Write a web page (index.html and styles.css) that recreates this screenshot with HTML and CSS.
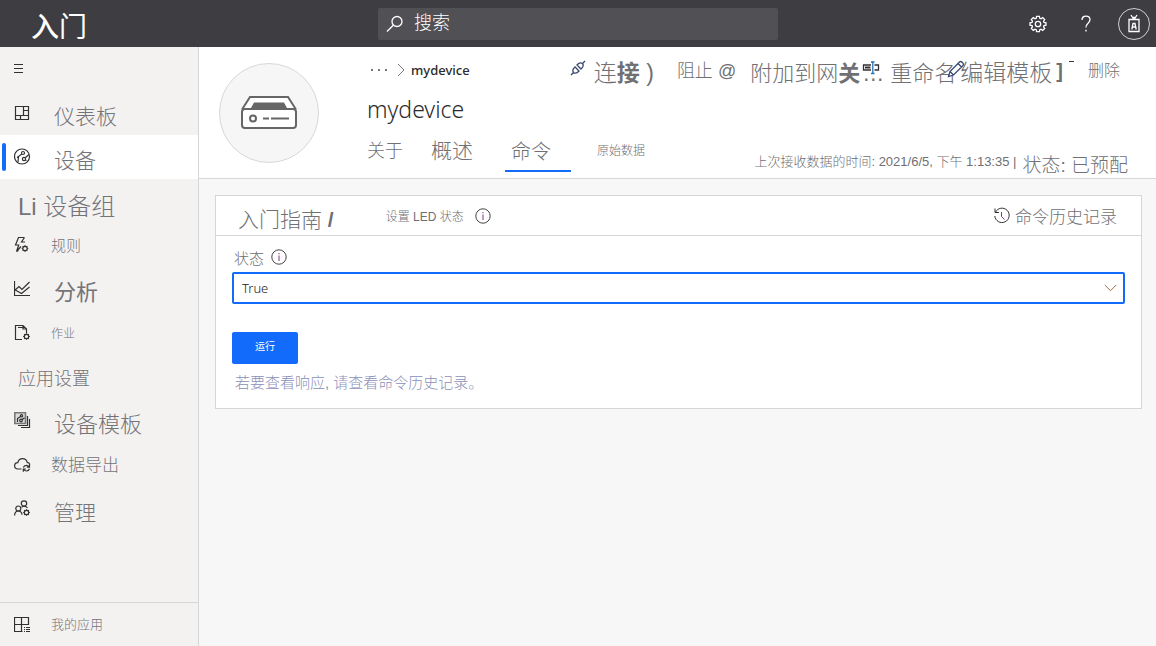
FILE: index.html
```html
<!DOCTYPE html>
<html lang="zh-CN">
<head>
<meta charset="utf-8">
<title>mydevice</title>
<link rel="stylesheet" href="styles.css">
</head>
<body>
<header class="topbar">
  <div class="brand"><b>入</b>门</div>
  <label class="search">
    <svg width="18" height="18" viewBox="0 0 18 18"><circle cx="11" cy="6.5" r="5"/><path d="M7.3 10.2 1 16.5"/></svg>
    <input type="search" placeholder="搜索" aria-label="搜索">
  </label>
  <div class="topbar-actions">
    <button class="icon-btn" aria-label="设置"><svg width="18" height="18" viewBox="0 0 18 18"><path d="M7.6 1.3h2.8l.4 2 1.2.5 1.7-1.2 2 2-1.2 1.7.5 1.2 2 .4v2.2l-2 .4-.5 1.2 1.2 1.7-2 2-1.7-1.2-1.2.5-.4 2H7.6l-.4-2-1.2-.5-1.7 1.2-2-2 1.2-1.7-.5-1.2-2-.4V7.9l2-.4.5-1.2-1.2-1.7 2-2L6 3.8l1.2-.5z"/><circle cx="9" cy="9" r="2.7"/></svg></button>
    <button class="icon-btn" aria-label="帮助"><svg width="12" height="18" viewBox="0 0 12 18"><path d="M2 5c0-2.500 1.700-3.800 4-3.800S10 2.600 10 4.800C10 8 6 8 6 12.500"/><path d="M6 14.800v1.700"/></svg></button>
    <button class="avatar" aria-label="帐户"><svg width="14" height="20" viewBox="0 0 14 20"><path d="M2 5.500h10v12H2zM4 1l2.500 4M10 1 7.500 5M5.500 3.500h3M4.800 15.500 6 9.500h2l1.200 6M5.200 13h3.600"/></svg></button>
  </div>
</header>
<div class="shell">
  <nav class="sidebar" aria-label="导航">
    <button class="nav-item menu" aria-label="菜单"><svg width="18" height="18" viewBox="0 0 18 18"><path d="M0 4.500h9M0 8.500h9M0 12.500h9"/></svg></button>
    <a class="nav-item big" href="#"><svg width="18" height="18" viewBox="0 0 18 18"><path d="M1.500 2.500h13v13h-13zM1.500 11.500h13M9.500 2.500v9M9.500 6.500h5M6.500 11.500v4"/></svg><span class="t21">仪表板</span></a>
    <a class="nav-item big active" href="#" aria-current="page"><svg width="18" height="18" viewBox="0 0 18 18"><circle cx="8" cy="8.500" r="7.500"/><circle cx="9" cy="5" r="1.500"/><circle cx="10" cy="11" r="1.600"/><path d="M7.800 6 4.500 8.500 4 14M11.200 9.800l3.800-3.300M3 9.500l1.500-1M11 12l1.500.5"/></svg><span class="t21">设备</span></a>
    <a class="nav-item big plain" href="#"><span class="t24">Li 设备组</span></a>
    <a class="nav-item" href="#"><svg width="18" height="18" viewBox="0 0 18 18"><path d="M10.500 1.500H4.500L1.500 9h3.200L2.500 15.500 7 10.500M10.500 1.500 7.500 6H11M2.500 15.500l2-1"/><circle cx="11" cy="12.500" r="2.200"/><path d="M11 9.200v1M11 14.800v1M7.700 12.500h1M13.300 12.500h1M8.700 10.200l.7.7M12.600 14.100l.7.700M8.700 14.800l.7-.7M12.600 10.900l.7-.7"/></svg><span class="t15">规则</span></a>
    <a class="nav-item big" href="#"><svg width="18" height="18" viewBox="0 0 18 18"><path d="M.5 1v14.500H16M.5 10.500 5 6.500l3 3L15.500 2M.500 9.500 7.500 13.500 15.500 7"/></svg><span class="t22 medium">分析</span></a>
    <a class="nav-item" href="#"><svg width="18" height="18" viewBox="0 0 18 18"><path d="M8 15.500H1.500v-14H9l3.500 3.500v4M4 3.500h5M9 1.500V5h3.500"/><circle cx="12.500" cy="12.500" r="2.200"/><path d="M12.500 9.200v1M12.500 14.800v1M9.200 12.500h1M14.800 12.500h1M10.200 10.200l.7.7M14.100 14.100l.7.700M10.200 14.800l.7-.7M14.100 10.900l.7-.7"/></svg><span class="t12">作业</span></a>
    <a class="nav-item plain" href="#"><span class="t18">应用设置</span></a>
    <a class="nav-item big" href="#"><svg width="18" height="18" viewBox="0 0 18 18"><path d="M.8.8h10.700v10.700H.8z" fill="#ddd" stroke="#777" stroke-width="1.600"/><circle cx="7.500" cy="3.800" r="1.100"/><circle cx="7" cy="8.500" r="1.300"/><path d="M6.500 4.500 3.500 6.500V10M8 7.700l2.500-2M13.500 4v9.500H4M15.500 7v8.500H7"/></svg><span class="t22">设备模板</span></a>
    <a class="nav-item" href="#"><svg width="18" height="18" viewBox="0 0 18 18"><path d="M7.500 13H4C2 13 .600 11.700.600 9.800S2 6.700 3.800 6.600C4.500 4 6.300 2.700 8.500 2.700c2.300 0 4.100 1.400 4.700 3.600 1.400.2 2.300 1 2.600 2.200M9.300 11.500c.6-1.500 1.700-2.200 3-2.200 1.200 0 2.100.5 2.800 1.500M15.500 8.500v2.700h-2.700M15.500 12.800c-.6 1.500-1.700 2.200-3 2.200-1.200 0-2.100-.5-2.800-1.500M9.300 15.700V13H12"/></svg><span class="t17">数据导出</span></a>
    <a class="nav-item big" href="#"><svg width="18" height="18" viewBox="0 0 18 18"><circle cx="10" cy="3.500" r="2.700"/><circle cx="4.300" cy="8.500" r="2.500"/><path d="M.6 15.500c0-2.700 1.500-4.500 3.700-4.500s3.700 1.800 3.700 3.700M7.500 7.300c1.500-1.500 4.500-1.500 6 .7"/><circle cx="12.500" cy="12.500" r="2.200"/><path d="M12.500 9.200v1M12.500 14.800v1M9.200 12.500h1M14.800 12.500h1M10.200 10.200l.7.7M14.100 14.100l.7.700M10.200 14.800l.7-.7M14.100 10.900l.7-.7"/></svg><span class="t21">管理</span></a>
    <a class="nav-item footer-item" href="#"><svg width="18" height="18" viewBox="0 0 18 18"><path d="M8.500 15.500h-8v-14h14v7.500M.500 8.500h14M7.500 1.500v14M10 11.500h1M12 11.500h4M10 13.500h1M12 13.500h4M10 15.500h1M12 15.500h4"/></svg><span class="t13">我的应用</span></a>
  </nav>
  <main class="main">
    <section class="device">
      <div class="device-pic"><svg width="58" height="36" viewBox="0 0 58 36"><path d="M2 14.500 10 2h38l8 12.500M5 14h48a3 3 0 0 1 3 3v13a3 3 0 0 1-3 3H5a3 3 0 0 1-3-3V17a3 3 0 0 1 3-3z" fill="#fff" stroke="#666" stroke-width="2"/><path d="M10.500 14 14 7.500h30l3.500 6.500z" fill="#666" stroke="none"/><circle cx="13" cy="23.500" r="3" fill="none" stroke="#666" stroke-width="2"/><path d="M23 23.500h6M31 23.500h18" stroke="#666" stroke-width="2"/></svg></div>
      <div class="device-info">
        <div class="row">
          <div class="crumbs"><span class="dots"><svg width="18" height="4" viewBox="0 0 18 4"><path d="M1 2h2M8 2h2M15 2h2" stroke-width="2"/></svg></span><svg width="8" height="14" viewBox="0 0 8 14"><path d="M1 1l6 6-6 6"/></svg><strong>mydevice</strong></div>
          <div class="commands">
            <button class="cmd connect"><svg width="16" height="16" viewBox="0 0 16 16"><path d="M1 15l2.500-2.500M12.500 3.500 15 1M3.500 12.500c-1.500-2-.8-3.500 1.500-5.500l4 4c-2 2.300-3.500 3-5.500 1.500zM12.500 3.500c-2-1.500-3.500-.8-5.500 1.500l4 4c2.300-2 3-3.500 1.500-5.500z"/></svg><span class="t23">连<b>接</b> )</span></button>
            <button class="cmd block"><span class="t18">阻止 @</span></button>
            <button class="cmd gateway"><span class="t22">附加到网<b>关</b></span></button>
            <button class="cmd rename"><svg width="18" height="14" viewBox="0 0 18 14"><path d="M9 4H1.500v5H9M12.500 4H16.500v5h-4"/><path d="M3 6.500h5.500" stroke-width="2"/><path d="M10.800 1.500v10.500M9 1h3.500M9 12.500h3.500" stroke="#2473b8"/></svg><span class="t22">… 重命名</span></button>
            <button class="cmd edit"><svg width="18" height="18" viewBox="0 0 18 18"><path d="M1.500 16.500 3 11.500 12.500 2c1.500-1.500 5 1.500 3.500 3.500L6.500 15zM11 3.500l3.500 3.500M3 11.500 6.500 15"/></svg><span class="t23">编辑模板</span><b class="bracket">]</b></button>
            <span class="mark" aria-hidden="true"></span>
            <button class="cmd delete"><span class="t16">删除</span></button>
          </div>
        </div>
        <h1>mydevice</h1>
        <div class="row tab-row">
          <div class="tabs">
            <a class="tab t18" href="#">关于</a>
            <a class="tab t21" href="#">概述</a>
            <a class="tab t20 selected" href="#">命令</a>
            <a class="tab t12" href="#">原始数据</a>
          </div>
          <div class="meta"><span class="t13">上次接收数据的时间: 2021/6/5, 下午 1:13:35 |</span><span class="status t19">状态: 已预配</span></div>
        </div>
      </div>
    </section>
    <section class="card">
      <div class="card-head">
        <h2 class="t21">入门指南 <b>/</b></h2>
        <span class="t12">设置 LED 状态</span>
        <svg class="info" width="16" height="16" viewBox="0 0 16 16"><circle cx="8" cy="8" r="7.200"/><path d="M8 6.500V12M8 4v1.300" stroke="#84307f"/></svg>
        <button class="history"><svg width="18" height="18" viewBox="0 0 18 18"><path d="M2.500 5.200A7.200 7.200 0 1 1 1.800 9M2 1.500v4h4"/><path d="M8.500 5v4.500l3 3" stroke="#84307f"/></svg><span class="t17">命令历史记录</span></button>
      </div>
      <form class="card-body">
        <div class="field-label"><label class="t15" for="state">状态</label><svg class="info" width="16" height="16" viewBox="0 0 16 16"><circle cx="8" cy="8" r="7.200"/><path d="M8 6.500V12M8 4v1.300" stroke="#84307f"/></svg></div>
        <div class="select-box">
          <select id="state"><option>True</option><option>False</option></select>
          <svg class="chevron" width="13" height="8" viewBox="0 0 13 8"><path d="M.8 1l5.700 5.700L12.200 1"/></svg>
        </div>
        <button class="run" type="button">运行</button>
        <p class="hint">若要查看响应, 请查看命令历史记录。</p>
      </form>
    </section>
  </main>
</div>
</body>
</html>
```
FILE: styles.css
```css
* { box-sizing: border-box; }
body {
  margin: 0;
  min-height: 100vh;
  display: flex;
  flex-direction: column;
  font-family: "Liberation Sans", "Noto Sans CJK SC", sans-serif;
  font-weight: 300;
  color: #6f6f74;
  background: #f7f7f7;
}
button, input, select { font: inherit; color: inherit; }
button { border: 0; padding: 0; background: none; cursor: pointer; }
a { color: inherit; text-decoration: none; }
svg { flex: none; fill: none; stroke: #323130; stroke-width: 1; }
h1, h2, p { margin: 0; font-weight: 300; }
b { font-weight: 600; }

.t12 { font-size: 12px; }
.t13 { font-size: 13px; }
.t15 { font-size: 15px; }
.t16 { font-size: 16px; }
.t17 { font-size: 17px; }
.t18 { font-size: 18px; }
.t19 { font-size: 19px; }
.t20 { font-size: 20px; }
.t21 { font-size: 21px; }
.t22 { font-size: 22px; }
.t23 { font-size: 23px; }
.t24 { font-size: 24px; }
.medium { font-weight: 400; }

.topbar {
  display: grid;
  grid-template-columns: 1fr 400px 1fr;
  align-items: center;
  height: 47px;
  background: #3e3d42;
  color: #fff;
}
.topbar svg { stroke: #fff; stroke-width: 1.3; }
.brand { padding: 8px 0 0 31px; font-size: 28px; line-height: 36px; font-weight: 400; }
.brand b { font-weight: 500; }
.search {
  display: flex;
  align-items: center;
  gap: 10px;
  height: 32px;
  padding-left: 8px;
  background: #515055;
  border-radius: 2px;
}
.search input { flex: 1; min-width: 0; border: 0; padding: 0; outline: 0; background: none; font-size: 18px; }
.search input::placeholder { color: #fff; opacity: 1; }
.topbar-actions { display: flex; justify-content: flex-end; align-items: center; padding-right: 6px; }
.icon-btn { display: grid; place-items: center; width: 48px; height: 46px; }
.avatar { display: grid; place-items: center; width: 32px; height: 32px; margin-left: 8px; border: 1px solid #d0d0d0; border-radius: 50%; }

.shell { flex: 1; display: flex; }
.sidebar { display: flex; flex-direction: column; flex: none; width: 199px; background: #f3f2f1; border-right: 1px solid #d6d6d6; }
.nav-item { position: relative; display: flex; align-items: center; gap: 19px; height: 44px; padding-left: 14px; line-height: 28px; color: #747478; }
.nav-item svg { stroke-width: 1.2; }
.nav-item span { padding-top: 1px; }
.nav-item.big span { padding-top: 8px; }
.big svg + span { margin-left: 3px; }
.nav-item.plain { padding: 3px 0 0 18px; }
.active { background: #fff; }
.active::before { content: ""; position: absolute; left: 2px; top: 8px; width: 4px; height: 28px; border-radius: 2px; background: #136bfb; }
.footer-item { margin-top: auto; border-top: 1px solid #d6d6d6; }

.main { flex: 1; min-width: 0; }
.device { display: flex; gap: 48px; height: 132px; padding: 0 28px 0 20px; background: #fff; border-bottom: 1px solid #d6d6d6; }
.device-pic { display: grid; place-items: center; flex: none; width: 100px; height: 100px; margin-top: 16px; border: 1px solid #d8d8d8; border-radius: 50%; background: #f6f6f6; }
.device-info { flex: 1; min-width: 0; display: flex; flex-direction: column; }
.row { display: flex; justify-content: space-between; white-space: nowrap; }
.crumbs { display: flex; align-items: center; gap: 6px; height: 46px; font-family: "Noto Sans", sans-serif; font-size: 13px; color: #2b2b2b; }
.crumbs strong { font-weight: 500; }
.crumbs svg { stroke: #777; }
.dots { display: flex; width: 24px; padding-left: 3px; }
.commands { display: flex; align-items: center; height: 46px; padding: 2px 8px 0 0; gap: 14px; }
.cmd { position: relative; display: flex; align-items: center; white-space: nowrap; }
.connect { gap: 8px; margin-right: 9px; }
.connect svg { margin-bottom: 6px; stroke: #38486f; stroke-width: 1.3; }
.block, .delete { padding-bottom: 5px; }
.rename svg { position: absolute; left: 0; top: 6px; stroke-width: 1.3; }
.edit svg { position: absolute; left: -13px; top: 6px; fill: #fff; stroke: #38486f; stroke-width: 1.3; }
.gateway { margin-right: -12px; }
.edit { margin-left: -10px; }
.bracket { margin-left: 4px; font-size: 20px; }
.mark { align-self: flex-start; width: 5px; height: 1px; margin: 12px 0 0 -8px; background: #333; }
h1 { font-family: "Noto Sans", sans-serif; font-size: 23px; line-height: 32px; font-weight: 300; color: #2b2b2b; }
.tab-row { margin-top: auto; height: 54px; }
.tabs { display: flex; }
.tab { display: flex; align-items: center; margin-right: 28px; height: 48px; }
.tab.selected { margin: 0 26px 0 4px; padding: 6px 20px 0 6px; height: 47px; border-bottom: 2px solid #136bfb; }
.meta { display: flex; align-items: center; gap: 6px; padding-top: 18px; }
.status { padding-top: 6px; }

.card { margin: 16px 14px 0 16px; background: #fff; border: 1px solid #d6d6d6; }
.card-head { display: flex; align-items: center; height: 40px; padding: 0 24px 0 22px; border-bottom: 1px solid #d6d6d6; }
.card-head h2 { margin-right: 52px; padding-top: 4px; }
.info { stroke: #444; margin-left: 11px; }
.history { display: flex; align-items: center; gap: 4px; margin-left: auto; }
.card-body { padding: 10px 16px 12px; }
.field-label { display: flex; align-items: center; height: 24px; padding: 0 0 2px 2px; }
.field-label .info { margin-left: 7px; }
.select-box { position: relative; margin-top: 2px; }
.select-box select { display: block; width: 100%; height: 32px; padding: 0 8px; border: 2px solid #136bfb; border-radius: 2px; outline: 0; appearance: none; background: #fff; font-family: "Noto Sans", sans-serif; font-size: 13px; font-weight: 300; color: #222; }
.chevron { position: absolute; right: 8px; top: 12px; stroke: #a46a42; pointer-events: none; }
.run { display: block; width: 66px; height: 32px; margin-top: 28px; padding-bottom: 6px; border-radius: 2px; background: #136bfb; color: #fff; font-size: 10px; font-weight: 400; }
.hint { margin: 6px 0 0 3px; font-size: 15px; line-height: 26px; color: #8a90b8; }
```
